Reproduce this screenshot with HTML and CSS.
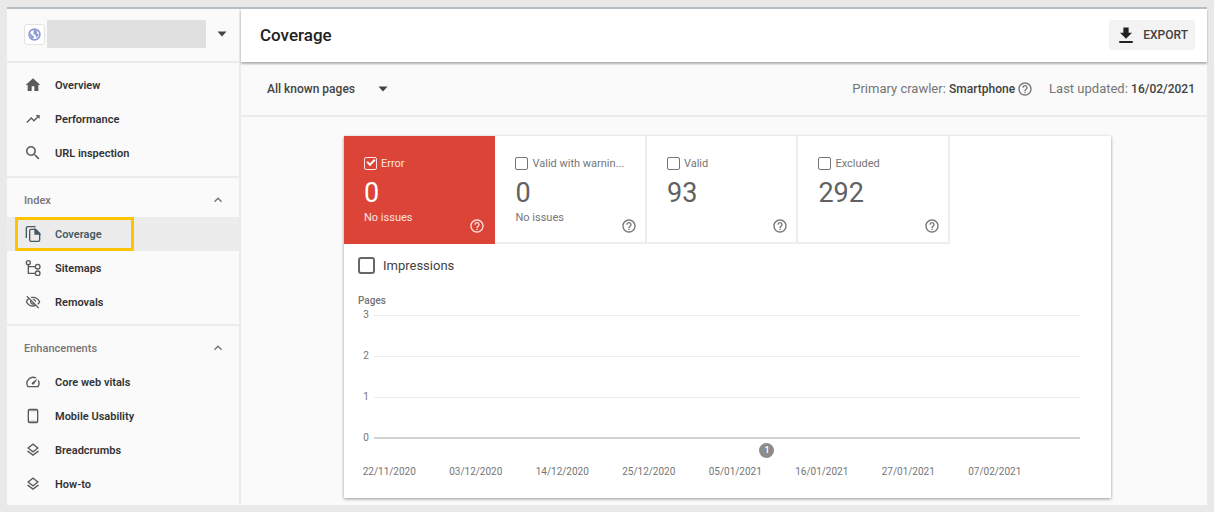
FILE: index.html
```html
<!DOCTYPE html>
<html lang="en">
<head>
    <meta charset="UTF-8">
    <meta name="viewport" content="width=device-width, initial-scale=1.0">
    <title>Coverage</title>
    <link rel="stylesheet" href="styles.css">
</head>
<body>
    <!-- shared icons -->
    <svg class="sprite" aria-hidden="true">
        <symbol id="help" viewBox="0 0 24 24"><path d="M11 18h2v-2h-2v2zm1-16C6.480 2 2 6.480 2 12s4.480 10 10 10 10-4.480 10-10S17.520 2 12 2zm0 18c-4.410 0-8-3.590-8-8s3.590-8 8-8 8 3.590 8 8-3.590 8-8 8zm0-14c-2.210 0-4 1.790-4 4h2c0-1.100.9-2 2-2s2 .9 2 2c0 2-3 1.750-3 5h2c0-2.250 3-2.500 3-5 0-2.210-1.790-4-4-4z"/></symbol>
        <symbol id="caret" viewBox="0 0 24 24"><path d="M3 7h18l-9 10z"/></symbol>
        <symbol id="up" viewBox="0 0 24 24"><path d="M12 8l-6 6 1.400 1.400L12 10.800l4.600 4.600L18 14z"/></symbol>
        <symbol id="layers" viewBox="0 0 24 24"><path d="M12 18.540l-7.370-5.730L3 14.070l9 7 9-7-1.630-1.270zM12 16l7.360-5.730L21 9l-9-7-9 7 1.630 1.270L12 16zm0-11.470L17.740 9 12 13.470 6.260 9 12 4.530z"/></symbol>
    </svg>

    <div class="app">
        <aside class="sidebar">
            <button class="property" aria-label="Select property">
                <span class="favicon">
                    <svg viewBox="0 0 24 24"><circle cx="12" cy="12" r="10" fill="#fff" stroke="#8b9bd3" stroke-width="3"/><path d="M4 9c2 1 3 5 5 5s2 4 1 6c-4-1-7-5-6-11zM10 4c3-1 5 0 7 2l-1 4c2 1 4 1 4 3l-4 5c-2-1-1-4-2-5s-4-1-4-4 2-3 0-5z" fill="#8b9bd3"/></svg>
                </span>
                <span class="property-name"></span>
                <svg class="caret"><use href="#caret"/></svg>
            </button>

            <nav>
                <div class="nav-group">
                    <a href="#"><svg viewBox="0 0 24 24"><path d="M10 21v-7h4v7h6v-9h3L12 2 1 12h3v9z"/></svg>Overview</a>
                    <a href="#"><svg viewBox="0 0 24 24"><path d="M16 6l2.290 2.290-4.880 4.880-4-4L2 16.590 3.410 18l6-6 4 4 6.300-6.290L22 12V6z"/></svg>Performance</a>
                    <a href="#"><svg viewBox="0 0 24 24"><path d="M15.500 14h-.79l-.28-.27A6.470 6.470 0 0 0 16 9.500 6.500 6.500 0 1 0 9.500 16c1.610 0 3.090-.59 4.230-1.570l.27.28v.79l5 4.990L20.490 19l-4.990-5zm-6 0C7.010 14 5 11.990 5 9.500S7.010 5 9.500 5 14 7.010 14 9.500 11.990 14 9.500 14z" transform="translate(-2 -2) scale(1.150)"/></svg>URL inspection</a>
                </div>
                <div class="nav-group">
                    <button class="nav-title">Index<svg><use href="#up"/></svg></button>
                    <a href="#" class="active"><svg viewBox="0 0 24 24" class="line"><path d="M2 18V3q0-2 2-2h12M9 5h7l6 6v10q0 2-2 2H9q-2 0-2-2V7q0-2 2-2z"/><path d="M15 5v7h7z" fill="currentColor"/></svg>Coverage<span class="highlight"></span></a>
                    <a href="#"><svg viewBox="0 0 24 24" class="line"><circle cx="5" cy="4" r="3"/><circle cx="19" cy="10" r="3.500"/><circle cx="19" cy="20" r="3.500"/><path d="M5 7v13h10M5 10h10"/></svg>Sitemaps</a>
                    <a href="#"><svg viewBox="0 0 24 24"><path d="M12 6c3.790 0 7.170 2.130 8.820 5.500-.59 1.220-1.420 2.270-2.410 3.120l1.410 1.410c1.390-1.230 2.490-2.770 3.180-4.530C21.270 7.110 17 4 12 4c-1.270 0-2.490.2-3.640.57l1.650 1.650C10.660 6.090 11.320 6 12 6zm-1.070 1.140L13 9.210c.57.25 1.030.71 1.280 1.280l2.070 2.070c.08-.34.14-.7.14-1.070C16.500 9.010 14.480 7 12 7c-.37 0-.72.05-1.070.14zM2.010 3.870l2.680 2.680C3.060 7.830 1.770 9.530 1 11.500 2.730 15.890 7 19 12 19c1.520 0 2.980-.29 4.320-.82l3.420 3.420 1.410-1.410L3.420 2.450 2.010 3.870zm7.500 7.500l2.610 2.610c-.04.01-.08.02-.12.02-1.380 0-2.500-1.120-2.500-2.500 0-.05.01-.08.01-.13zm-3.400-3.400l1.750 1.750c-.23.55-.36 1.150-.36 1.780 0 2.480 2.020 4.500 4.500 4.500.63 0 1.230-.13 1.770-.36l.98.98c-.88.24-1.800.38-2.750.38-3.790 0-7.170-2.130-8.820-5.500.7-1.430 1.720-2.610 2.930-3.530z"/></svg>Removals</a>
                </div>
                <div class="nav-group">
                    <button class="nav-title">Enhancements<svg><use href="#up"/></svg></button>
                    <a href="#"><svg viewBox="0 0 24 24"><path d="M20.380 8.570l-1.230 1.850a8 8 0 0 1-.22 7.580H5.070A8 8 0 0 1 15.580 6.850l1.850-1.230A10 10 0 0 0 3.350 19a2 2 0 0 0 1.720 1h13.850a2 2 0 0 0 1.740-1 10 10 0 0 0-.27-10.440z"/><path d="M10.590 15.410a2 2 0 0 0 2.830 0l5.660-8.490-8.490 5.660a2 2 0 0 0 0 2.830z"/></svg>Core web vitals</a>
                    <a href="#"><svg viewBox="0 0 24 24" class="line"><rect x="5" y="2" width="14" height="20" rx="2"/><path d="M5 4h14M5 20h14" stroke-width="1"/></svg>Mobile Usability</a>
                    <a href="#"><svg><use href="#layers"/></svg>Breadcrumbs</a>
                    <a href="#"><svg><use href="#layers"/></svg>How-to</a>
                </div>
            </nav>
        </aside>

        <main>
            <header>
                <h1>Coverage</h1>
                <button class="export">
                    <svg viewBox="0 0 24 24"><path d="M20 9h-4.500V2h-7v7H4l8 8zM3 20v2.500h18V20z"/></svg>EXPORT
                </button>
            </header>

            <div class="filters">
                <div class="select">
                    <select aria-label="Pages">
                        <option>All known pages</option>
                    </select>
                    <svg class="caret"><use href="#caret"/></svg>
                </div>
                <div class="info">
                    <span>Primary crawler: <b>Smartphone</b></span>
                    <svg><use href="#help"/></svg>
                    <span class="updated">Last updated: <b>16/02/2021</b></span>
                </div>
            </div>

            <section class="card">
                <div class="tiles">
                    <div class="tile error">
                        <label><input type="checkbox" checked>Error</label>
                        <strong>0</strong>
                        <p><span>No issues</span><svg><use href="#help"/></svg></p>
                    </div>
                    <div class="tile">
                        <label><input type="checkbox">Valid with warnin...</label>
                        <strong>0</strong>
                        <p><span>No issues</span><svg><use href="#help"/></svg></p>
                    </div>
                    <div class="tile">
                        <label><input type="checkbox">Valid</label>
                        <strong>93</strong>
                        <p><span></span><svg><use href="#help"/></svg></p>
                    </div>
                    <div class="tile">
                        <label><input type="checkbox">Excluded</label>
                        <strong>292</strong>
                        <p><span></span><svg><use href="#help"/></svg></p>
                    </div>
                </div>

                <label class="impressions"><input type="checkbox">Impressions</label>

                <div class="chart">
                    <div class="chart-title">Pages</div>
                    <div class="plot">
                        <div class="row"><span>3</span><i></i></div>
                        <div class="row"><span>2</span><i></i></div>
                        <div class="row"><span>1</span><i></i></div>
                        <div class="row zero"><span>0</span><i><button class="marker">1</button></i></div>
                    </div>
                    <div class="dates">
                        <span>22/11/2020</span>
                        <span>03/12/2020</span>
                        <span>14/12/2020</span>
                        <span>25/12/2020</span>
                        <span>05/01/2021</span>
                        <span>16/01/2021</span>
                        <span>27/01/2021</span>
                        <span>07/02/2021</span>
                    </div>
                </div>
            </section>
        </main>
    </div>
</body>
</html>
```
FILE: styles.css
```css
:root {
    --frame: #e9e9e9;
    --bg: #fafafa;
    --line: #ebebeb;
    --text: #333;
    --muted: #757575;
    --red: #db4437;
    --yellow: #ffc400;
}

* {
    box-sizing: border-box;
}

body {
    margin: 0;
    padding: 7px;
    min-height: 100vh;
    display: flex;
    background-color: var(--frame);
    color: var(--text);
    font-family: Roboto, sans-serif;
    font-size: 12px;
}

svg {
    display: block;
    flex: none;
    fill: currentColor;
}

button {
    border: none;
    padding: 0;
    background: none;
    font-family: inherit;
    cursor: pointer;
}

.sprite {
    position: absolute;
    width: 0;
    height: 0;
}

.app {
    flex: 1;
    display: flex;
    border-top: 2px solid #b5bec5;
    background-color: var(--bg);
}

.caret {
    width: 12px;
    height: 12px;
    color: #444;
}

/* sidebar */
.sidebar {
    width: 234px;
    flex: none;
    border-right: 2px solid var(--line);
}

.property {
    display: flex;
    align-items: center;
    width: 100%;
    height: 54px;
    padding: 0 11px 2px 17px;
    border-bottom: 2px solid var(--line);
}

.favicon {
    padding: 3px;
    border: 1px solid #e4e4e4;
    border-radius: 3px;
    background-color: white;
}

.favicon svg {
    width: 13px;
    height: 13px;
}

.property-name {
    flex: 1;
    height: 28px;
    margin: 0 10px 0 2px;
    background-color: #e0e0e0;
}

.nav-group {
    padding: 5px 0;
    border-bottom: 2px solid var(--line);
}

.nav-group:first-child {
    padding-bottom: 6px;
}

.nav-group:last-child {
    border-bottom: none;
    padding-bottom: 0;
}

.nav-group a {
    position: relative;
    display: flex;
    align-items: center;
    gap: 14px;
    height: 34px;
    padding-left: 18px;
    color: var(--text);
    font-size: 11px;
    font-weight: 600;
    text-decoration: none;
}

.nav-group a svg {
    width: 16px;
    height: 16px;
    color: #5a5a5a;
}

.nav-group svg.line {
    fill: none;
    stroke: currentColor;
    stroke-width: 2;
}

.nav-group a.active {
    background-color: #ececec;
    color: #455a64;
}

.nav-group a.active svg {
    color: #455a64;
}

.highlight {
    position: absolute;
    top: 0;
    bottom: 0;
    left: 8px;
    width: 119px;
    border: 3px solid var(--yellow);
}

.nav-title {
    display: flex;
    align-items: center;
    justify-content: space-between;
    width: 100%;
    height: 34px;
    padding: 0 13px 0 17px;
    color: var(--muted);
    font-size: 11px;
    font-weight: 500;
}

.nav-title svg {
    width: 16px;
    height: 16px;
}

/* main */
main {
    flex: 1;
    min-width: 0;
}

header {
    position: relative;
    display: flex;
    align-items: center;
    justify-content: space-between;
    height: 53px;
    padding: 0 12px 2px 19px;
    background-color: white;
    box-shadow: 0 2px 2px rgba(0, 0, 0, 0.3);
}

h1 {
    margin: 0;
    color: #212121;
    font-size: 17px;
    font-weight: 500;
}

.export {
    display: flex;
    align-items: center;
    gap: 8px;
    height: 30px;
    padding: 0 7px 0 8px;
    border-radius: 2px;
    background-color: #f3f3f3;
    color: #424242;
    font-size: 12px;
    font-weight: 500;
}

.export svg {
    width: 18px;
    height: 18px;
    color: #222;
}

.filters {
    display: flex;
    align-items: center;
    justify-content: space-between;
    height: 55px;
    padding: 0 12px 0 26px;
    border-bottom: 2px solid var(--line);
}

.select {
    display: flex;
    align-items: center;
}

.select select {
    appearance: none;
    width: 122px;
    margin-right: -12px;
    padding: 4px 0;
    border: none;
    background: none;
    color: #444;
    font-family: inherit;
    font-size: 12px;
    font-weight: 500;
}

.select .caret {
    pointer-events: none;
}

.info {
    display: flex;
    align-items: center;
    color: var(--muted);
    font-size: 13px;
}

.info b {
    color: #424242;
    font-size: 12px;
    font-weight: 500;
}

.info svg {
    width: 16px;
    height: 16px;
    margin-left: 2px;
}

.updated {
    margin-left: 16px;
}

.card {
    margin: 19px 96px 7px 103px;
    padding-bottom: 19px;
    background-color: white;
    box-shadow: 0 1px 3px rgba(0, 0, 0, 0.4);
}

.tiles {
    display: grid;
    grid-template-columns: repeat(4, 1fr);
    width: 79%;
}

.tile {
    min-width: 0;
    padding: 19px 8px 8px 20px;
    border-right: 2px solid #eee;
    border-bottom: 2px solid #eee;
    color: var(--muted);
    font-size: 11px;
}

.tile label {
    display: flex;
    align-items: center;
    gap: 4px;
    height: 16px;
    white-space: nowrap;
}

.tile strong {
    display: block;
    margin-top: 7px;
    color: #616161;
    font-size: 27px;
    font-weight: 400;
    line-height: 30px;
}

.tile p {
    display: flex;
    justify-content: space-between;
    align-items: flex-end;
    height: 24px;
    margin: 2px 0 0;
}

.tile p span {
    align-self: flex-start;
    line-height: 16px;
}

.tile svg {
    width: 16px;
    height: 16px;
}

.tile.error {
    border-color: var(--red);
    background-color: var(--red);
    color: #fbe3e1;
}

.tile.error strong {
    color: white;
}

input[type="checkbox"] {
    appearance: none;
    flex: none;
    display: flex;
    align-items: center;
    justify-content: center;
    width: 13px;
    height: 13px;
    margin: 0;
    border: 1px solid;
    border-radius: 2px;
    color: inherit;
}

input[type="checkbox"]:checked::after {
    content: "";
    width: 8px;
    height: 5px;
    margin-bottom: 3px;
    border-left: 2px solid white;
    border-bottom: 2px solid white;
    box-sizing: border-box;
    transform: rotate(-45deg);
}

.impressions {
    display: flex;
    align-items: center;
    gap: 8px;
    margin: 13px 0 0 14px;
    color: #424242;
    font-size: 13px;
}

.impressions input[type="checkbox"] {
    width: 17px;
    height: 17px;
    border: 2px solid #666;
    border-radius: 3px;
}

/* chart */
.chart {
    margin-top: 20px;
    color: var(--muted);
    font-size: 10px;
    line-height: 14px;
}

.chart-title {
    padding-left: 14px;
    font-weight: 500;
}

.plot {
    display: grid;
    gap: 27px;
    margin: 0 31px 0 18px;
}

.row {
    display: flex;
    align-items: center;
    gap: 4px;
}

.row span {
    width: 8px;
    text-align: center;
}

.row i {
    position: relative;
    flex: 1;
    height: 1px;
    background-color: #ececec;
}

.row.zero i {
    height: 2px;
    background-color: #d2d2d2;
}

.marker {
    position: absolute;
    top: 6px;
    left: 54.6%;
    width: 15px;
    height: 15px;
    border-radius: 50%;
    background-color: #8c8c8c;
    color: white;
    font-size: 9px;
    font-weight: 500;
    line-height: 15px;
}

.dates {
    display: grid;
    grid-template-columns: repeat(8, 1fr);
    margin: 20px 73px 0 2px;
    text-align: center;
}
```
